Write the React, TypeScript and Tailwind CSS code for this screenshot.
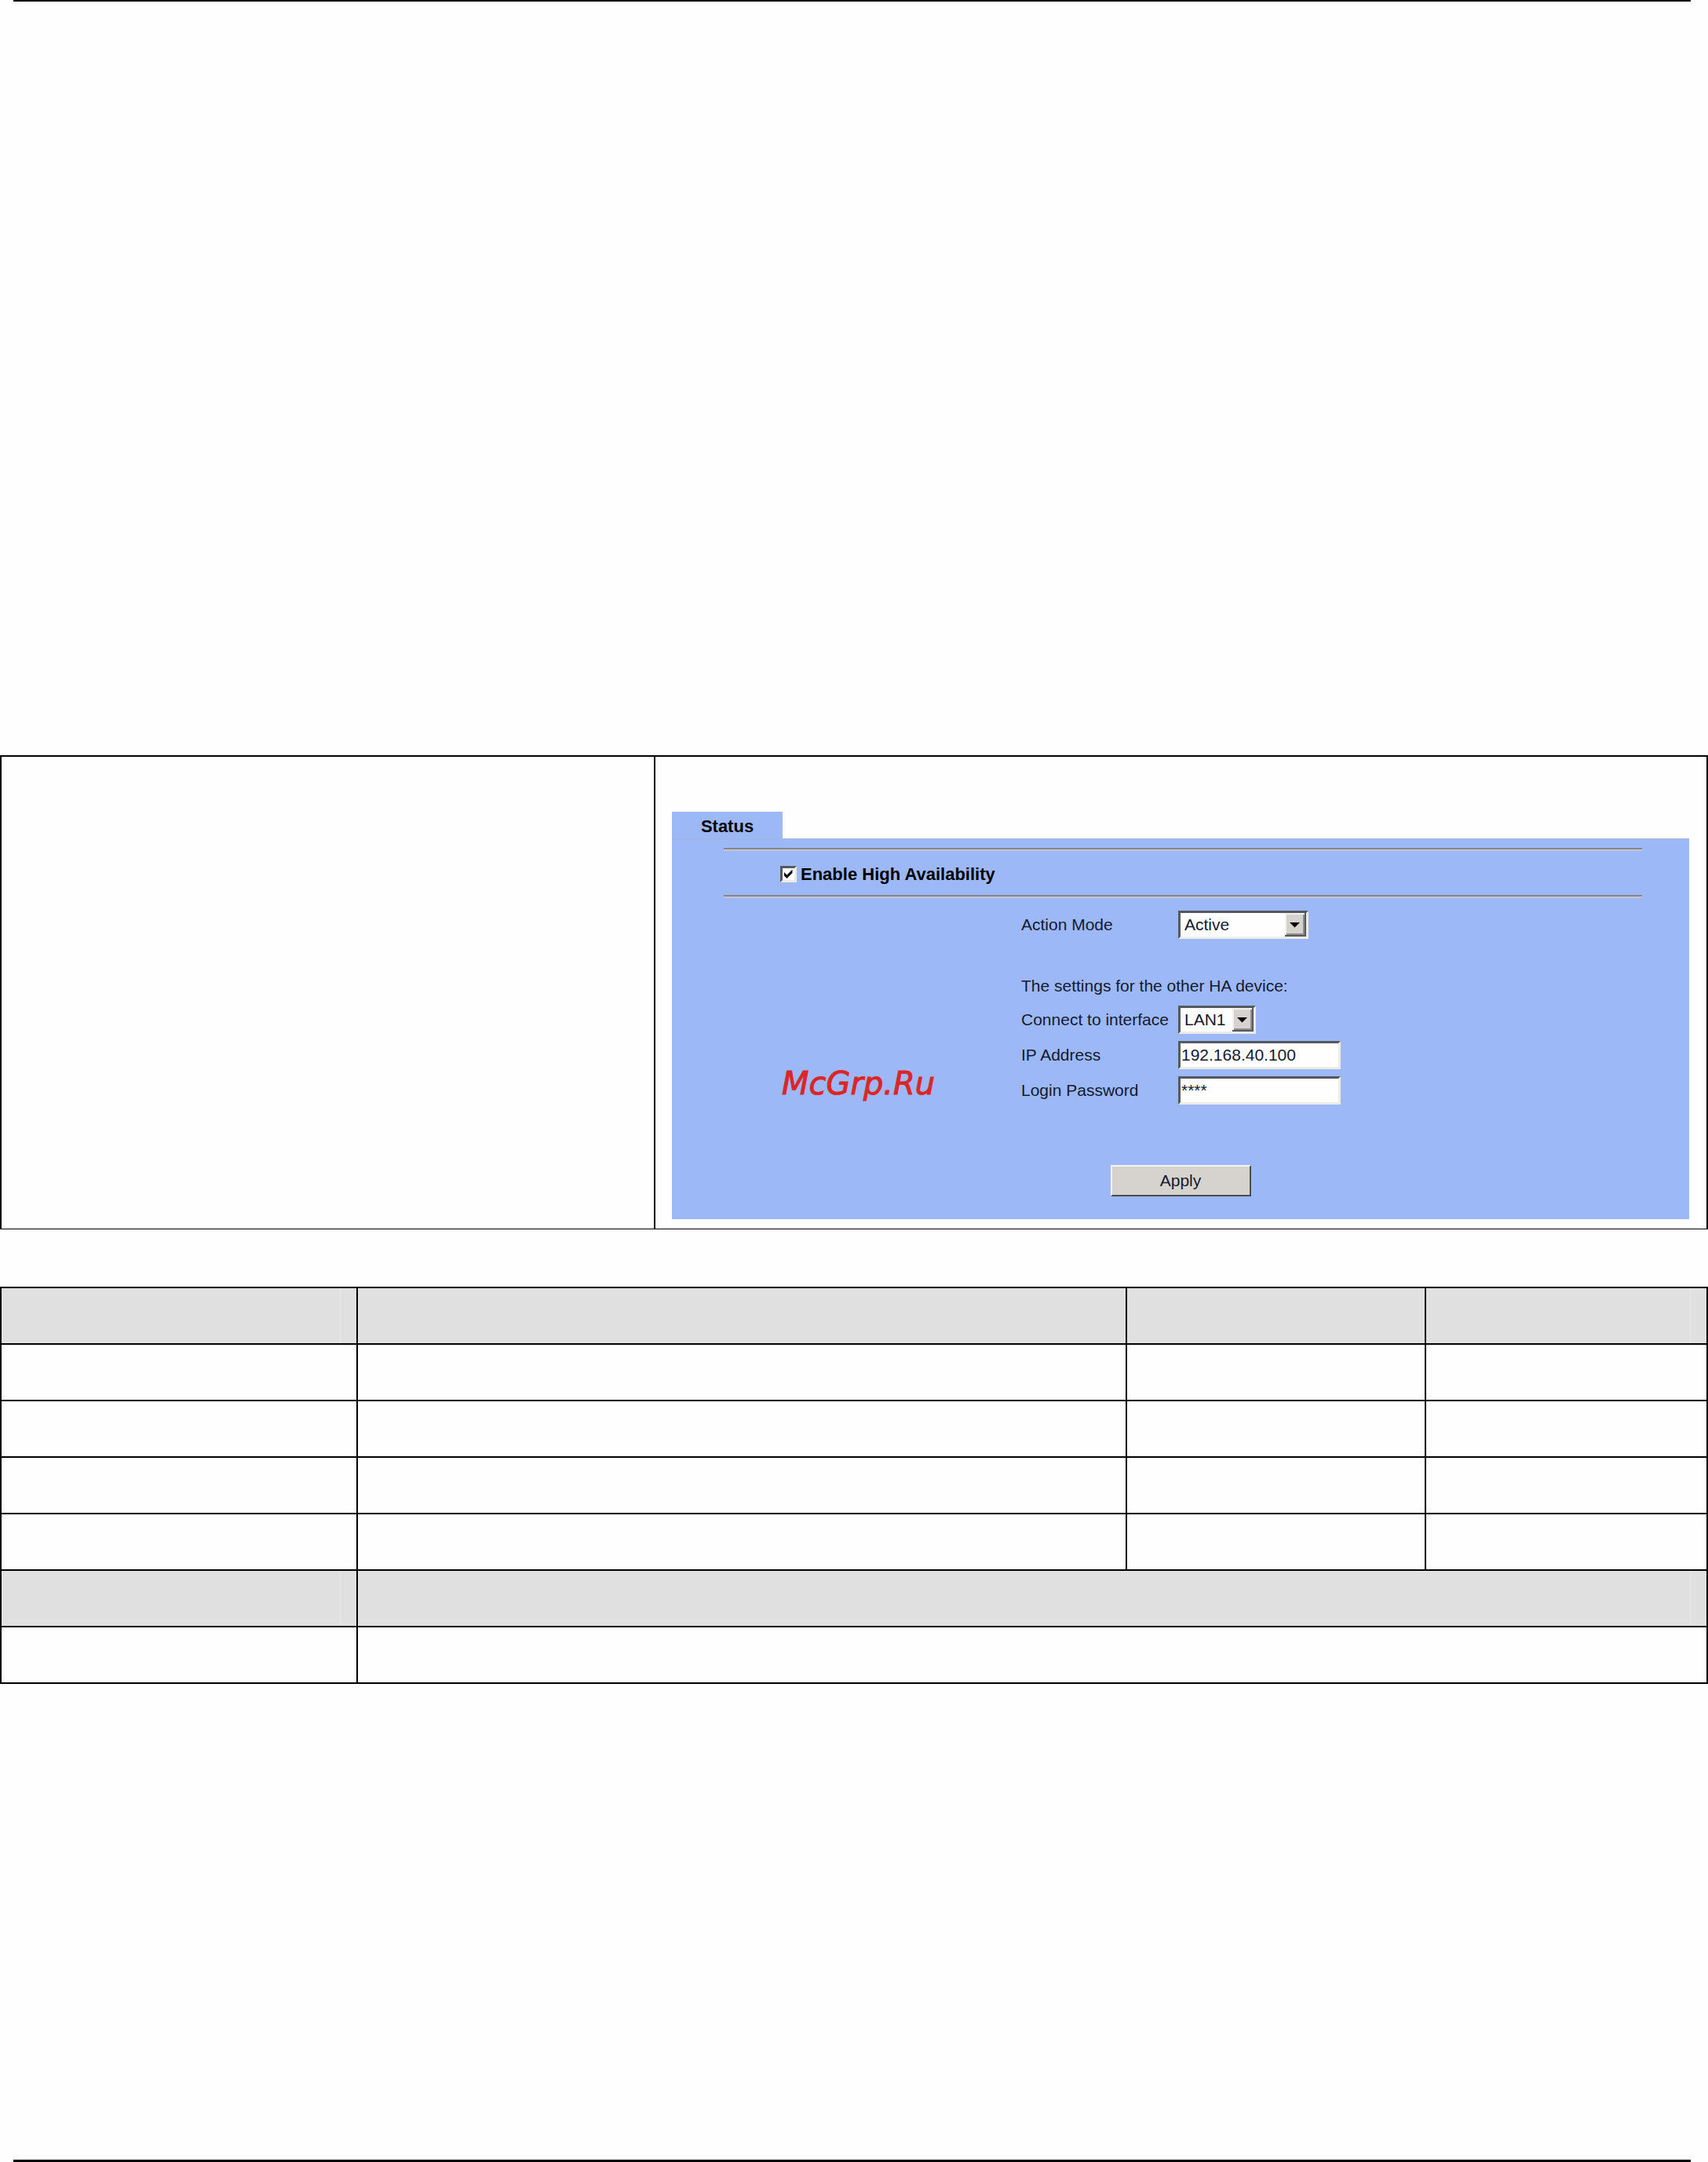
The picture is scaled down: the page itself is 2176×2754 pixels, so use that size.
import { useState } from "react";
import type { ReactNode } from "react";
import clsx from "clsx";

const fieldFrame =
  "h-9 border-[3px] border-t-[#55585c] border-l-[#55585c] border-r-[#ecebe6] border-b-[#ecebe6] bg-[#fefefe] text-[21px] leading-6 outline-none";

const bodyRows = ["action-1", "action-2", "action-3", "action-4"];

function Divider() {
  return <hr className="mr-[60px] ml-[66px] h-1 border-t-2 border-b-2 border-t-[#85858c] border-b-[#c6c5cf]" />;
}

function ArrowButton() {
  return (
    <svg
      className="pointer-events-none absolute top-[3px] right-[3px] h-[30px] w-[27px]"
      viewBox="0 0 27 30"
      aria-hidden="true"
    >
      <rect width="27" height="30" fill="#55585c" />
      <rect width="25" height="28" fill="#f4f2ee" />
      <rect x="2" y="2" width="23" height="26" fill="#8e8c88" />
      <rect x="2" y="2" width="21" height="24" fill="#d6d3ce" />
      <path d="M6 12h13l-6.500 6.500z" fill="#000" />
    </svg>
  );
}

type PickerProps = {
  id: string;
  options: string[];
  className: string;
};

function Picker({ id, options, className }: PickerProps) {
  return (
    <div className={clsx("relative", className)}>
      <select id={id} className={clsx(fieldFrame, "w-full appearance-none pl-[5px]")}>
        {options.map((option) => (
          <option key={option}>{option}</option>
        ))}
      </select>
      <ArrowButton />
    </div>
  );
}

function Field({ id, label, children }: { id: string; label: string; children: ReactNode }) {
  return (
    <div className="flex items-center">
      <label htmlFor={id} className="w-[200px] shrink-0 whitespace-nowrap">
        {label}
      </label>
      {children}
    </div>
  );
}

function HighAvailabilityForm() {
  const [enabled, setEnabled] = useState(true);
  const [address, setAddress] = useState("192.168.40.100");
  const [password, setPassword] = useState("****");

  return (
    <form className="text-[21px] leading-6 text-[#141a30]" onSubmit={(e) => e.preventDefault()}>
      <div className="flex h-[34px] w-[141px] items-center justify-center bg-[#9db8f7] pt-[3px] text-[22px] font-bold text-black">
        Status
      </div>

      <div className="border-t border-[#a3b4d6] bg-[#9db8f7] pt-[11px] pb-[29px]">
        <Divider />
        <div className="flex h-[56px] items-center gap-[5px] pt-[3px] pl-[138px]">
          <span className="relative h-[21px] w-[21px]">
            <input
              id="enable-ha"
              type="checkbox"
              checked={enabled}
              onChange={(e) => setEnabled(e.target.checked)}
              className="block h-[21px] w-[21px] appearance-none border-[3px] border-t-[#55585c] border-l-[#55585c] border-r-[#ecebe6] border-b-[#ecebe6] bg-white"
            />
            {enabled && (
              <svg
                className="pointer-events-none absolute top-0 left-0 h-[21px] w-[21px]"
                viewBox="0 0 21 21"
                aria-hidden="true"
              >
                <path d="M5 8l3.500 3.500 7-7v4.500l-7 7L5 12.500z" fill="#111" />
              </svg>
            )}
          </span>
          <label htmlFor="enable-ha" className="text-[22px] font-bold text-black">
            Enable High Availability
          </label>
        </div>
        <Divider />

        <div className="flex pt-4">
          <div className="w-[445px] shrink-0 pt-[200px] pl-[140px]">
            <span className="block font-['DejaVu_Sans',sans-serif] text-[40px] leading-10 text-[#dc2626] italic [-webkit-text-stroke:1px_#dc2626]">
              McGrp.Ru
            </span>
          </div>

          <div className="flex flex-col gap-[9px]">
            <Field id="action-mode" label="Action Mode">
              <Picker id="action-mode" options={["Active", "Standby"]} className="w-[166px]" />
            </Field>
            <p className="mt-[35px] flex h-8 items-center">The settings for the other HA device:</p>
            <Field id="interface" label="Connect to interface">
              <Picker id="interface" options={["LAN1", "LAN2"]} className="w-[99px]" />
            </Field>
            <Field id="ip-address" label="IP Address">
              <input
                id="ip-address"
                type="text"
                value={address}
                onChange={(e) => setAddress(e.target.value)}
                className={clsx(fieldFrame, "w-[207px] pl-px")}
              />
            </Field>
            <Field id="login-password" label="Login Password">
              <input
                id="login-password"
                type="text"
                autoComplete="off"
                value={password}
                onChange={(e) => setPassword(e.target.value)}
                className={clsx(fieldFrame, "w-[207px] pl-px")}
              />
            </Field>
          </div>
        </div>

        <div className="mt-[77px] flex justify-center">
          <button
            type="submit"
            className="h-10 w-[179px] border-2 border-t-[#f6f4f0] border-l-[#f6f4f0] border-r-[#4a4c52] border-b-[#4a4c52] bg-[#d6d3ce]"
          >
            Apply
          </button>
        </div>
      </div>
    </form>
  );
}

function ShadedCell() {
  return <td className="h-[72px] border-2 border-black bg-[#e0e0e0] p-0" />;
}

// Shaded cell with the faint seam near its right edge
function SeamCell({ colSpan }: { colSpan?: number }) {
  return (
    <td colSpan={colSpan} className="border-2 border-black bg-[#e0e0e0] p-0 pr-5">
      <div className="h-[70px] border-r border-[#e9e9e9]" />
    </td>
  );
}

function PlainCell({ colSpan }: { colSpan?: number }) {
  return <td colSpan={colSpan} className="h-[72px] border-2 border-black p-0" />;
}

function SettingsTable() {
  return (
    <table className="w-full table-fixed border-collapse">
      <colgroup>
        <col className="w-[20.88%]" />
        <col className="w-[45.08%]" />
        <col className="w-[17.53%]" />
        <col className="w-[16.51%]" />
      </colgroup>
      <tbody>
        <tr>
          <SeamCell />
          <ShadedCell />
          <ShadedCell />
          <SeamCell />
        </tr>
        {bodyRows.map((row) => (
          <tr key={row}>
            <PlainCell />
            <PlainCell />
            <PlainCell />
            <PlainCell />
          </tr>
        ))}
        <tr>
          <SeamCell />
          <SeamCell colSpan={3} />
        </tr>
        <tr>
          <PlainCell />
          <PlainCell colSpan={3} />
        </tr>
      </tbody>
    </table>
  );
}

export default function App() {
  return (
    <main className="bg-[#fefefe] font-['Liberation_Sans',Arial,sans-serif]">
      <hr className="mr-[22px] ml-[17px] border-t-2 border-black" />

      <section className="mt-[960px] grid grid-cols-[831fr_1341fr] border-2 border-b border-black">
        <div />
        <div className="border-l-2 border-black pt-[70px] pr-[22px] pb-3 pl-[21px]">
          <HighAvailabilityForm />
        </div>
      </section>

      <section className="mt-[73px]">
        <SettingsTable />
      </section>

      <hr className="mt-[606px] mr-[22px] ml-[17px] border-t-[3px] border-black" />
    </main>
  );
}
